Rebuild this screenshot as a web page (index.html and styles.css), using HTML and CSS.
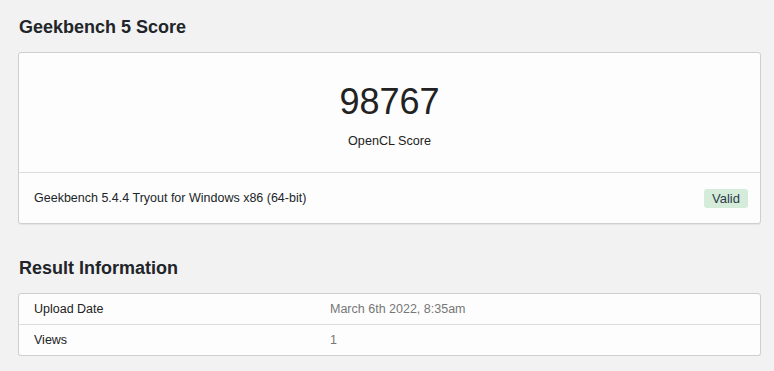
FILE: index.html
```html
<!DOCTYPE html>
<html>
<head>
<meta charset="utf-8">
<link rel="stylesheet" href="styles.css">
</head>
<body>
<main class="page">
  <h2 class="heading">Geekbench 5 Score</h2>
  <section class="card">
    <div class="score-block">
      <div class="score">98767</div>
      <div class="score-label">OpenCL Score</div>
    </div>
    <div class="card-footer">
      <span>Geekbench 5.4.4 Tryout for Windows x86 (64-bit)</span>
      <span class="badge">Valid</span>
    </div>
  </section>

  <h2 class="heading heading-second">Result Information</h2>
  <section class="card table">
    <div class="row">
      <div class="cell-name">Upload Date</div>
      <div class="cell-value">March 6th 2022, 8:35am</div>
    </div>
    <div class="row">
      <div class="cell-name">Views</div>
      <div class="cell-value">1</div>
    </div>
  </section>
</main>
</body>
</html>
```

FILE: styles.css
```css
html, body {
  margin: 0;
  padding: 0;
  background: #f2f2f2;
}
body {
  font-family: "Liberation Sans", Arial, sans-serif;
  color: #212529;
  font-size: 12.5px;
}
.page {
  padding: 16px 13px 0 18px;
}
.heading {
  margin: 0 0 14px 1px;
  font-size: 18px;
  line-height: 22px;
  font-weight: bold;
  color: #212529;
}
.heading-second {
  margin-top: 33px;
  margin-bottom: 14px;
}
.card {
  background: #fdfdfd;
  border: 1px solid #cfcfcf;
  border-radius: 3px;
  box-shadow: 0 1px 1px rgba(0,0,0,0.06);
}
.score-block {
  display: flex;
  flex-direction: column;
  align-items: center;
  padding: 28px 0 23px;
  border-bottom: 1px solid #dcdcdc;
}
.score {
  font-size: 36px;
  line-height: 42px;
  color: #222;
}
.score-label {
  margin-top: 10px;
  font-size: 12.6px;
  line-height: 16px;
  color: #222;
}
.card-footer {
  display: flex;
  justify-content: space-between;
  align-items: center;
  height: 50px;
  padding: 0 12px 0 15px;
}
.badge {
  display: inline-block;
  background: #d4ecd9;
  color: #2d3a4a;
  border-radius: 3px;
  padding: 2px 8px;
  line-height: 15px;
  font-size: 13px;
}
.row {
  display: grid;
  grid-template-columns: 296px 1fr;
  height: 30px;
  align-items: center;
  padding-left: 15px;
}
.row + .row {
  border-top: 1px solid #dcdcdc;
}
.cell-name {
  color: #222;
}
.cell-value {
  color: #777;
}
```
